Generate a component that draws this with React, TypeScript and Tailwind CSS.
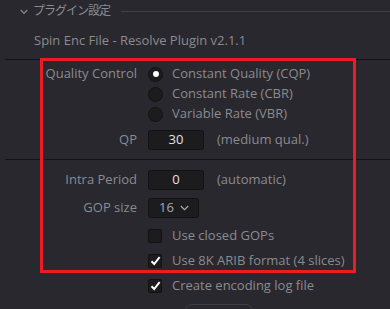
import { FC, ReactElement, ReactNode } from 'react'

const font = { fontFamily: '"Open Sans", "Noto Sans CJK JP", sans-serif' }

type RowProps = {
  label?: string
  className?: string
  children: ReactNode
}

const Row: FC<RowProps> = ({ label, className, children }): ReactElement => (
  <div className={`flex items-center ${className ?? ''}`}>
    <div className="w-[137px] shrink-0 text-right text-[13px] text-[#8b8b91]">{label}</div>
    <div className="ml-[11px] flex items-center">{children}</div>
  </div>
)

const Radio: FC<{ checked?: boolean; label: string }> = ({ checked, label }) => (
  <Row className="h-[20px]">
    <div className="flex h-[15px] w-[15px] items-center justify-center rounded-full border border-[#131315] bg-[#1c1c1f]">
      {checked && <div className="h-[6px] w-[6px] rounded-full bg-white" />}
    </div>
    <span className="ml-[9px] text-[13px] text-[#8b8b91]">{label}</span>
  </Row>
)

const Check: FC<{ checked?: boolean; label: string }> = ({ checked, label }) => (
  <Row className="h-[25px]">
    <div className="flex h-[14px] w-[14px] items-center justify-center rounded-[2px] border border-[#111113] bg-[#1c1c1f]">
      {checked && (
        <svg width="11" height="10" viewBox="0 0 11 10">
          <path d="M1.5 5.2 L4.2 8 L9.6 1.2" fill="none" stroke="#fff" strokeWidth="2" />
        </svg>
      )}
    </div>
    <span className="ml-[10px] text-[13px] text-[#8b8b91]">{label}</span>
  </Row>
)

const Field: FC<{ value: string }> = ({ value }) => (
  <div className="flex h-[20px] w-[56px] items-center justify-center rounded-[3px] border border-[#121214] bg-[#1c1c1f] text-[13px] text-[#e2e2e6]">
    {value}
  </div>
)

const App: FC = (): ReactElement => {
  return (
    <div className="relative h-[309px] w-[390px] overflow-hidden bg-[#28282e]" style={font}>
      <div className="flex h-[22px] items-center pl-[20px]">
        <svg width="8" height="6" viewBox="0 0 8 6" className="mt-[1px]">
          <path d="M0.8 1 L4 4.4 L7.2 1" fill="none" stroke="#8b8b91" strokeWidth="1.2" />
        </svg>
        <span className="ml-[5px] text-[12px] tracking-[-1px] text-[#8b8b91]">プラグイン設定</span>
        <div className="ml-[11px] h-px flex-1 bg-[#3f3f45]" />
      </div>
      <div className="mt-[9px] flex h-[20px] items-center pl-[34px] text-[13px] text-[#8b8b91]">
        Spin Enc File - Resolve Plugin v2.1.1
      </div>
      <div className="ml-[5px] mt-[8px] h-px bg-[#141416]" />

      <div className="pt-[4px]">
        <Row label="Quality Control" className="h-[20px]">
          <div className="flex h-[15px] w-[15px] items-center justify-center rounded-full border border-[#131315] bg-[#1c1c1f]">
            <div className="h-[6px] w-[6px] rounded-full bg-white" />
          </div>
          <span className="ml-[9px] text-[13px] text-[#8b8b91]">Constant Quality (CQP)</span>
        </Row>
        <Radio label="Constant Rate (CBR)" />
        <Radio label="Variable Rate (VBR)" />
        <Row label="QP" className="mt-[6px] h-[20px]">
          <Field value="30" />
          <span className="ml-[13px] text-[13px] text-[#8b8b91]">(medium qual.)</span>
        </Row>
      </div>

      <div className="ml-[5px] mt-[9px] h-px bg-[#141416]" />

      <div className="pt-[10px]">
        <Row label="Intra Period" className="h-[20px]">
          <Field value="0" />
          <span className="ml-[13px] text-[13px] text-[#8b8b91]">(automatic)</span>
        </Row>
        <Row label="GOP size" className="mt-[8px] h-[20px]">
          <div className="flex h-[20px] w-[51px] items-center rounded-[3px] border border-[#121214] bg-[#1c1c1f] pl-[10px] text-[13px] text-[#a9a9ae]">
            16
            <svg width="9" height="6" viewBox="0 0 9 6" className="ml-[6px]">
              <path d="M0.8 1 L4.5 4.6 L8.2 1" fill="none" stroke="#a9a9ae" strokeWidth="1.2" />
            </svg>
          </div>
        </Row>
        <div className="mt-[5px]">
          <Check label="Use closed GOPs" />
          <Check checked label="Use 8K ARIB format (4 slices)" />
          <Check checked label="Create encoding log file" />
        </div>
        <div className="ml-[185px] mt-[6px] h-[24px] w-[68px] rounded-[7px] border border-[#3d3d44]" />
      </div>

      <div className="pointer-events-none absolute left-[40px] top-[58px] h-[215px] w-[316px] border-[3px] border-[#ec1c24]" />
    </div>
  )
}

export default App
